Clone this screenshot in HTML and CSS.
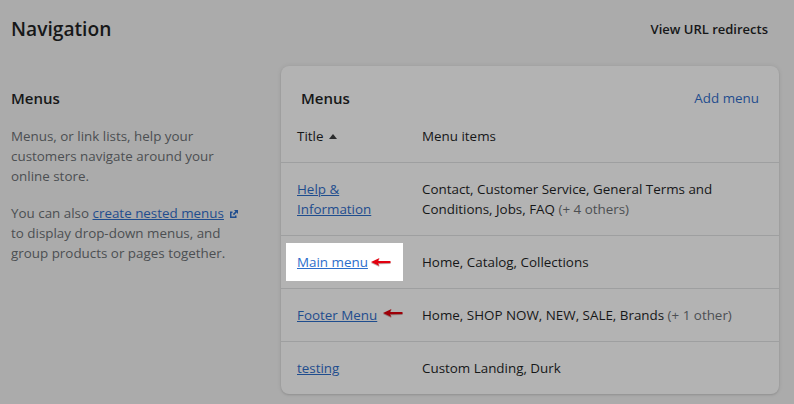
FILE: index.html
```
<!DOCTYPE html>
<html lang="en">
<head>
<meta charset="utf-8">
<title>Navigation</title>
<link rel="stylesheet" href="styles.css">
</head>
<body>
<div class="page">
  <header class="page-header">
    <h1 class="page-title">Navigation</h1>
    <a class="plain-btn" href="#">View URL redirects</a>
  </header>
  <div class="layout">
    <aside class="annot">
      <h2 class="heading">Menus</h2>
      <p class="desc">Menus, or link lists, help your customers navigate around your online store.</p>
      <p class="desc">You can also <a class="ext-link" href="#">create nested menus</a><svg class="ext-icon" viewBox="0 0 10 10" width="10" height="10"><path d="M1 2.5v6.5h6.5V6.5H6v1H2.5V4h1V2.5z" fill="#1f4d8e"/><path d="M5 1h4v4L7.6 3.6 5 6.2 3.8 5 6.4 2.4z" fill="#1f4d8e"/></svg> to display drop-down menus, and group products or pages together.</p>
    </aside>
    <section class="card">
      <div class="card-head">
        <h2 class="heading">Menus</h2>
        <a class="add-link" href="#">Add menu</a>
      </div>
      <div class="menu-table">
        <div class="row head">
          <div class="cell col-title">Title<svg class="sort" viewBox="0 0 8 5" width="8" height="5"><path d="M0 5 L4 0 L8 5 Z" fill="#2a2b2c"/></svg></div>
          <div class="cell col-items">Menu items</div>
        </div>
        <div class="row">
          <div class="cell col-title"><a class="row-link" href="#">Help &amp; Information</a></div>
          <div class="cell col-items">Contact, Customer Service, General Terms and Conditions, Jobs, FAQ <span class="muted">(+ 4 others)</span></div>
        </div>
        <div class="row">
          <div class="cell col-title nowrap"><span class="spot"></span><a class="row-link lit" href="#">Main menu</a><svg class="arrow a1" viewBox="0 0 20 8" width="20" height="8"><path d="M0 4 L8.5 0 L7 2.9 L19 3.1 L20 4 L19 4.9 L7 5.3 L8.5 8 Z" fill="#e3000f"/></svg></div>
          <div class="cell col-items">Home, Catalog, Collections</div>
        </div>
        <div class="row">
          <div class="cell col-title nowrap"><a class="row-link" href="#">Footer Menu</a><svg class="arrow a2" viewBox="0 0 20 8" width="20" height="8"><path d="M0 4 L8.5 0 L7 2.9 L19 3.1 L20 4 L19 4.9 L7 5.3 L8.5 8 Z" fill="#9e0008"/></svg></div>
          <div class="cell col-items">Home, SHOP NOW, NEW, SALE, Brands <span class="muted">(+ 1 other)</span></div>
        </div>
        <div class="row">
          <div class="cell col-title"><a class="row-link" href="#">testing</a></div>
          <div class="cell col-items">Custom Landing, Durk</div>
        </div>
      </div>
    </section>
  </div>
</div>
</body>
</html>
```
FILE: styles.css
```
* { box-sizing: border-box; }
html, body {
  margin: 0;
  padding: 0;
  background: #ababab;
}
body {
  font-family: "Open Sans", "Noto Sans", sans-serif;
  font-size: 13.4px;
  line-height: 20px;
  color: #161718;
  width: 794px;
  height: 404px;
  overflow: hidden;
}
.page {
  padding: 0 15px 0 11px;
}
.page-header {
  display: flex;
  justify-content: space-between;
  align-items: center;
  height: 28px;
  margin-top: 15px;
  margin-bottom: 23px;
}
.page-title {
  margin: 0;
  font-size: 19.2px;
  line-height: 28px;
  font-weight: 600;
}
.plain-btn {
  color: #161718;
  text-decoration: none;
  font-weight: 600;
  font-size: 13px;
  margin-right: 11px;
}
.layout {
  display: flex;
  gap: 20px;
  align-items: flex-start;
}
.annot {
  width: 250px;
  flex: 0 0 250px;
  padding: 20px 20px 0 0;
}
.heading {
  margin: 0;
  font-size: 15px;
  line-height: 24px;
  font-weight: 600;
}
.desc {
  margin: 16px 0 0;
  color: #4c4f52;
}
.desc + .desc { margin-top: 17px; }
.ext-link, .row-link {
  color: #1f4d8e;
  text-decoration: underline;
}
.ext-icon {
  margin-left: 5px;
  vertical-align: -1px;
}
.card {
  flex: 1;
  background: #b3b3b3;
  border-radius: 8px;
  box-shadow: 0 0 5px rgba(0,0,0,0.08), 0 1px 2px rgba(0,0,0,0.12);
}
.card-head {
  display: flex;
  justify-content: space-between;
  align-items: center;
  padding: 20px 20px 0 20px;
}
.add-link {
  color: #1f4d8e;
  text-decoration: none;
}
.row {
  display: grid;
  grid-template-columns: 141px 1fr;
  border-top: 1px solid #9e9fa0;
}
.row.head { border-top: none; }
.cell {
  padding: 16px 16px 16px 0;
}
.col-title {
  padding-left: 16px;
  position: relative;
}
.nowrap { white-space: nowrap; }
.sort {
  margin-left: 6px;
  vertical-align: 2px;
}
.muted { color: #4c4f52; }
.spot {
  position: absolute;
  left: 5px;
  top: 7px;
  width: 117px;
  height: 38px;
  background: #ffffff;
}
.row-link.lit {
  position: relative;
  color: #2c6ecb;
}
.arrow {
  position: relative;
  vertical-align: 1px;
  filter: drop-shadow(0 1px 0.5px rgba(80,0,0,0.35));
}
.a1 { margin-left: 3px; }
.a2 { margin-left: 6px; vertical-align: 3px; }
```
